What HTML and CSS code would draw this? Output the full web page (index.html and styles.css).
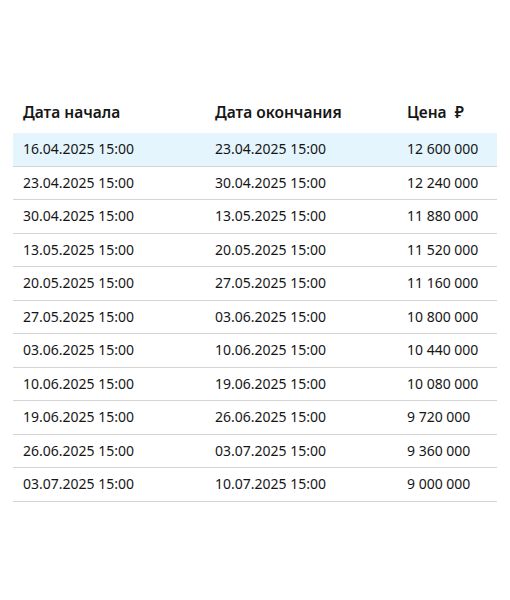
FILE: index.html
```html
<!DOCTYPE html>
<html lang="ru">
<head>
<meta charset="utf-8">
<link rel="stylesheet" href="styles.css">
</head>
<body>
<div class="wrap">
<table class="schedule">
<thead>
<tr><th class="c1">Дата начала</th><th class="c2">Дата окончания</th><th class="c3">Цена&nbsp; ₽</th></tr>
</thead>
<tbody>
<tr class="active"><td>16.04.2025 15:00</td><td>23.04.2025 15:00</td><td>12 600 000</td></tr>
<tr><td>23.04.2025 15:00</td><td>30.04.2025 15:00</td><td>12 240 000</td></tr>
<tr><td>30.04.2025 15:00</td><td>13.05.2025 15:00</td><td>11 880 000</td></tr>
<tr><td>13.05.2025 15:00</td><td>20.05.2025 15:00</td><td>11 520 000</td></tr>
<tr><td>20.05.2025 15:00</td><td>27.05.2025 15:00</td><td>11 160 000</td></tr>
<tr><td>27.05.2025 15:00</td><td>03.06.2025 15:00</td><td>10 800 000</td></tr>
<tr><td>03.06.2025 15:00</td><td>10.06.2025 15:00</td><td>10 440 000</td></tr>
<tr><td>10.06.2025 15:00</td><td>19.06.2025 15:00</td><td>10 080 000</td></tr>
<tr><td>19.06.2025 15:00</td><td>26.06.2025 15:00</td><td>9 720 000</td></tr>
<tr><td>26.06.2025 15:00</td><td>03.07.2025 15:00</td><td>9 360 000</td></tr>
<tr><td>03.07.2025 15:00</td><td>10.07.2025 15:00</td><td>9 000 000</td></tr>
</tbody>
</table>
</div>
</body>
</html>
```
FILE: styles.css
```css
html, body {
  margin: 0;
  padding: 0;
  background: #ffffff;
}
.wrap {
  padding: 96px 0 0 13px;
}
.schedule {
  width: 484px;
  border-collapse: collapse;
  table-layout: fixed;
  font-family: "Noto Sans", "Open Sans", sans-serif;
  color: #161616;
}
.schedule th {
  text-align: left;
  font-size: 15.5px;
  font-weight: 600;
  line-height: 20px;
  padding: 6px 10px 11px;
}
.schedule .c1, .schedule .c2 {
  width: 172px;
}
.schedule td {
  font-size: 14px;
  line-height: 20px;
  padding: 6.25px 10px;
  border-bottom: 1px solid #d4d4d4;
  white-space: nowrap;
}
.schedule tr.active td {
  background: #e4f5fd;
}
```
